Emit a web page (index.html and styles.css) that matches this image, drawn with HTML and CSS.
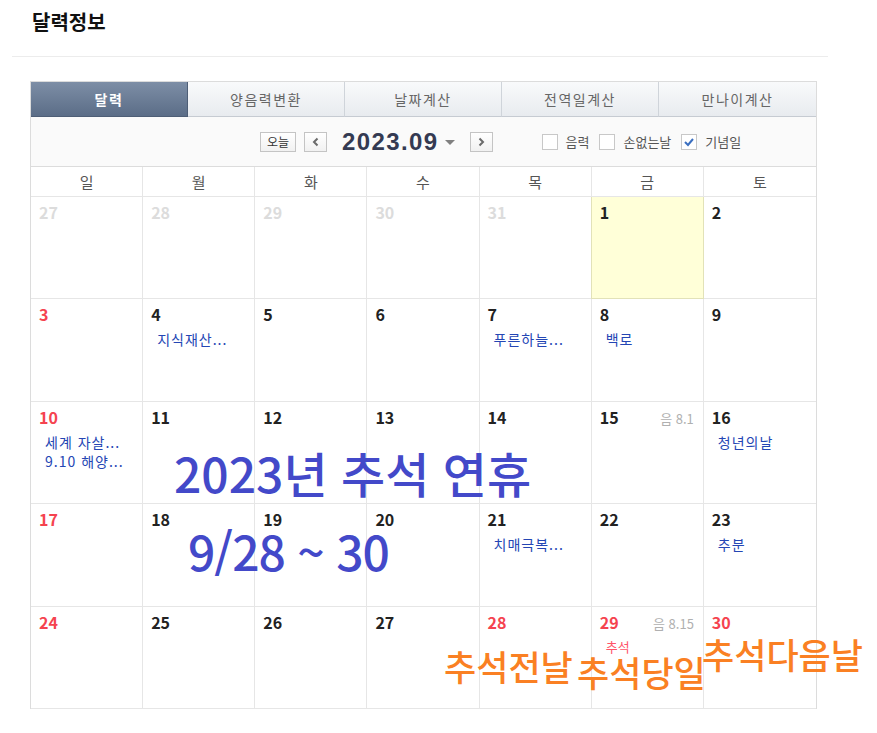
FILE: index.html
```html
<!DOCTYPE html>
<html lang="ko">
<head>
  <meta charset="UTF-8" />
  <title>달력정보</title>
  <link rel="stylesheet" href="styles.css">
</head>
<body>
  <div class="head">
    <h2>달력정보</h2>
  </div>

  <div class="cal">
    <!-- 탭 -->
    <ul class="tabs">
      <li class="tab on">달력</li>
      <li class="tab">양음력변환</li>
      <li class="tab">날짜계산</li>
      <li class="tab">전역일계산</li>
      <li class="tab">만나이계산</li>
    </ul>

    <!-- 이동/옵션 -->
    <div class="toolbar">
      <button class="btn today-btn" type="button">오늘</button>
      <button class="btn arrow" type="button">
        <svg width="10" height="10" viewBox="0 0 10 10"><path d="M6.5 1.5 L3 5 L6.5 8.5" fill="none" stroke="#6a6a6a" stroke-width="2"/></svg>
      </button>
      <strong class="ym">2023.09</strong>
      <span class="caret"></span>
      <button class="btn arrow next" type="button">
        <svg width="10" height="10" viewBox="0 0 10 10"><path d="M3.5 1.5 L7 5 L3.5 8.5" fill="none" stroke="#6a6a6a" stroke-width="2"/></svg>
      </button>
      <div class="opts">
        <label class="opt"><span class="chk"></span>음력</label>
        <label class="opt"><span class="chk"></span>손없는날</label>
        <label class="opt"><span class="chk on"><svg width="12" height="12" viewBox="0 0 12 12"><path d="M2 6 L5 9 L10 3" fill="none" stroke="#3b6fc0" stroke-width="2"/></svg></span>기념일</label>
      </div>
    </div>

    <!-- 요일 -->
    <div class="week">
      <div>일</div><div>월</div><div>화</div><div>수</div><div>목</div><div>금</div><div>토</div>
    </div>

    <!-- 날짜 -->
    <div class="days">
      <div class="day"><div class="top"><span class="num dim">27</span></div></div>
      <div class="day"><div class="top"><span class="num dim">28</span></div></div>
      <div class="day"><div class="top"><span class="num dim">29</span></div></div>
      <div class="day"><div class="top"><span class="num dim">30</span></div></div>
      <div class="day"><div class="top"><span class="num dim">31</span></div></div>
      <div class="day today"><div class="top"><span class="num">1</span></div></div>
      <div class="day"><div class="top"><span class="num">2</span></div></div>

      <div class="day"><div class="top"><span class="num red">3</span></div></div>
      <div class="day"><div class="top"><span class="num">4</span></div><p class="ev">지식재산...</p></div>
      <div class="day"><div class="top"><span class="num">5</span></div></div>
      <div class="day"><div class="top"><span class="num">6</span></div></div>
      <div class="day"><div class="top"><span class="num">7</span></div><p class="ev">푸른하늘...</p></div>
      <div class="day"><div class="top"><span class="num">8</span></div><p class="ev">백로</p></div>
      <div class="day"><div class="top"><span class="num">9</span></div></div>

      <div class="day"><div class="top"><span class="num red">10</span></div><p class="ev">세계 자살...</p><p class="ev">9.10 해양...</p></div>
      <div class="day"><div class="top"><span class="num">11</span></div></div>
      <div class="day"><div class="top"><span class="num">12</span></div></div>
      <div class="day"><div class="top"><span class="num">13</span></div></div>
      <div class="day"><div class="top"><span class="num">14</span></div></div>
      <div class="day"><div class="top"><span class="num">15</span><span class="lunar">음 8.1</span></div></div>
      <div class="day"><div class="top"><span class="num">16</span></div><p class="ev">청년의날</p></div>

      <div class="day"><div class="top"><span class="num red">17</span></div></div>
      <div class="day"><div class="top"><span class="num">18</span></div></div>
      <div class="day"><div class="top"><span class="num">19</span></div></div>
      <div class="day"><div class="top"><span class="num">20</span></div></div>
      <div class="day"><div class="top"><span class="num">21</span></div><p class="ev">치매극복...</p></div>
      <div class="day"><div class="top"><span class="num">22</span></div></div>
      <div class="day"><div class="top"><span class="num">23</span></div><p class="ev">추분</p></div>

      <div class="day"><div class="top"><span class="num red">24</span></div></div>
      <div class="day"><div class="top"><span class="num">25</span></div></div>
      <div class="day"><div class="top"><span class="num">26</span></div></div>
      <div class="day"><div class="top"><span class="num">27</span></div></div>
      <div class="day"><div class="top"><span class="num red">28</span></div></div>
      <div class="day"><div class="top"><span class="num red">29</span><span class="lunar">음 8.15</span></div><p class="ev hol">추석</p></div>
      <div class="day"><div class="top"><span class="num red">30</span></div></div>
    </div>

    <!-- 손글씨 메모 -->
    <div class="note blue n-title">2023년 추석 연휴</div>
    <div class="note blue n-date">9/28 ~ 30</div>
    <div class="note orange n-28">추석전날</div>
    <div class="note orange n-29">추석당일</div>
    <div class="note orange n-30">추석다음날</div>
  </div>
</body>
</html>
```

FILE: styles.css
```css
body { margin: 0; background: #fff; color: #222; font-family: "Noto Sans CJK KR", "Noto Sans", sans-serif; }

.head { width: 796px; margin-left: 12px; padding: 8px 0 20px 20px; border-bottom: 1px solid #ececec; }
.head h2 { margin: 0; font-size: 20px; line-height: 28px; font-weight: bold; color: #111; }

.cal { position: relative; width: 785px; margin: 24px 0 0 30px; border: 1px solid #dcdcdc; border-bottom: none; }

/* tabs */
.tabs { display: grid; grid-template-columns: repeat(5, 1fr); margin: 0; padding: 0; list-style: none; }
.tab { height: 34px; line-height: 34px; text-align: center; font-size: 14px; letter-spacing: 1.5px; color: #666;
  background: linear-gradient(#f9fafb, #e8ebef); border-right: 1px solid #cfd4da; border-bottom: 1px solid #c6cbd2; }
.tab:last-child { border-right: none; }
.tab.on { color: #fff; font-weight: bold; background: linear-gradient(#7d8ea6, #5b6d87); border-color: #4e5e76; }

/* toolbar */
.toolbar { display: flex; align-items: center; height: 49px; padding-left: 229px; background: #fafafa; border-bottom: 1px solid #dcdcdc; }
.btn { box-sizing: border-box; height: 20px; padding: 0; border: 1px solid #c4c4c4; background: linear-gradient(#fff, #f1f1f1); cursor: pointer; font-family: inherit; }
.today-btn { width: 36px; font-size: 12px; line-height: 17px; color: #333; margin-right: 8px; }
.arrow { width: 23px; display: flex; align-items: center; justify-content: center; }
.ym { margin-left: 15px; font-family: "Liberation Sans", Arial, sans-serif; font-size: 24px; letter-spacing: 1.4px; color: #343a52; }
.caret { width: 0; height: 0; margin: 2px 0 0 6px; border-left: 5px solid transparent; border-right: 5px solid transparent; border-top: 5px solid #808080; }
.next { margin-left: 15px; }
.opts { display: flex; align-items: center; gap: 10px; margin-left: 49px; }
.opt { display: flex; align-items: center; gap: 8px; font-size: 13px; color: #555; }
.chk { box-sizing: border-box; width: 16px; height: 16px; border: 1px solid #c8c8c8; background: #fff; display: flex; align-items: center; justify-content: center; }

/* weekday header */
.week { display: grid; grid-template-columns: repeat(7, 1fr); }
.week div { height: 29px; line-height: 29px; text-align: center; font-size: 15px; color: #555; border-right: 1px solid #e6e6e6; border-bottom: 1px solid #e6e6e6; }
.week div:last-child { border-right: none; }

/* day cells */
.days { display: grid; grid-template-columns: repeat(7, 1fr); grid-auto-rows: 102.4px; }
.day { box-sizing: border-box; padding: 5px 8px 0 8px; border-right: 1px solid #e6e6e6; border-bottom: 1px solid #e6e6e6; }
.day:nth-child(7n) { border-right: none; }
.day.today { background: #ffffd8; border-color: #e2e2b8; box-shadow: -1px 0 0 #e2e2b8; }
.top { display: flex; justify-content: space-between; align-items: baseline; }
.num { font-size: 16px; line-height: 20px; font-weight: bold; color: #222; }
.num.red { color: #f5434f; }
.num.dim { color: #dcdcdc; }
.lunar { font-size: 13px; color: #b0b0b0; margin-right: 1px; }
.ev { margin: 6px 0 0 0; padding-left: 6px; font-size: 14px; line-height: 19px; letter-spacing: 1px; color: #2446b4; white-space: nowrap; }
.ev + .ev { margin-top: 0; }
.ev.hol { font-size: 13px; letter-spacing: 0; color: #ff5469; margin-top: 4px; }

/* overlay notes */
.note { position: absolute; line-height: 1; white-space: nowrap; font-weight: 500; }
.blue { color: #4349c9; font-size: 48px; }
.orange { color: #fa8023; font-size: 35px; }
.n-title { left: 143px; top: 366px; }
.n-date { left: 157px; top: 444px; letter-spacing: -1px; }
.n-28 { left: 413px; top: 566px; }
.n-29 { left: 546px; top: 572px; }
.n-30 { left: 671px; top: 554px; }
```
